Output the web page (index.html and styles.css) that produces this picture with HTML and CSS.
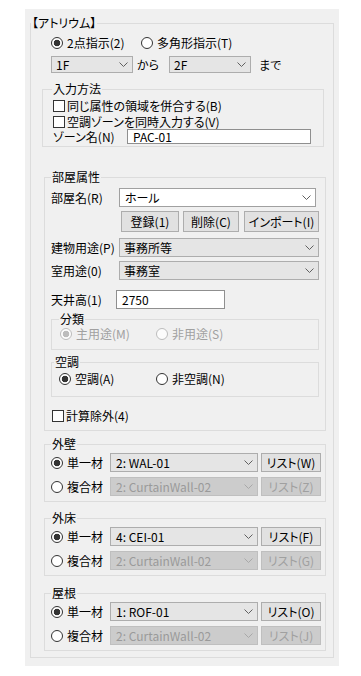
FILE: index.html
```html
<!DOCTYPE html>
<html lang="ja">
<head>
<meta charset="utf-8">
<title>アトリウム</title>
<link rel="stylesheet" href="styles.css">
</head>
<body>
<div class="panel">
  <section class="box outer">
    <div class="title t-outer">【アトリウム】</div>
    <div class="r-mode">
      <label class="opt w-mode1"><span class="radio on"></span>2点指示(2)</label>
      <label class="opt"><span class="radio"></span>多角形指示(T)</label>
    </div>
    <div class="r-floor">
      <div class="combo floor"><span>1F</span><svg class="chev" width="9" height="5" viewBox="0 0 9 5"><polyline points="0.5,0.5 4.5,4.5 8.5,0.5"/></svg></div>
      <span class="w-kara">から</span>
      <div class="combo floor"><span>2F</span><svg class="chev" width="9" height="5" viewBox="0 0 9 5"><polyline points="0.5,0.5 4.5,4.5 8.5,0.5"/></svg></div>
      <span class="w-made">まで</span>
    </div>

    <section class="box method">
      <div class="title t-method">入力方法</div>
      <label class="chk-row h16"><span class="check"></span>同じ属性の領域を併合する(B)</label>
      <label class="chk-row h15"><span class="check"></span>空調ゾーンを同時入力する(V)</label>
      <div class="zone">
        <span class="lbl-zone">ゾーン名(N)</span>
        <div class="edit zone-edit">PAC-01</div>
      </div>
    </section>

    <section class="box room">
      <div class="title t-room">部屋属性</div>
      <div class="f-row">
        <span class="lbl-room">部屋名(R)</span>
        <div class="combo-edit room-name"><span>ホール</span><svg class="chev" width="9" height="5" viewBox="0 0 9 5"><polyline points="0.5,0.5 4.5,4.5 8.5,0.5"/></svg></div>
      </div>
      <div class="btn-row">
        <button class="btn b-reg">登録(1)</button>
        <button class="btn b-del">削除(C)</button>
        <button class="btn b-imp">インポート(I)</button>
      </div>
      <div class="f-row mt6">
        <span class="lbl-room">建物用途(P)</span>
        <div class="combo use"><span>事務所等</span><svg class="chev" width="9" height="5" viewBox="0 0 9 5"><polyline points="0.5,0.5 4.5,4.5 8.5,0.5"/></svg></div>
      </div>
      <div class="f-row mt4">
        <span class="lbl-room">室用途(0)</span>
        <div class="combo use"><span>事務室</span><svg class="chev" width="9" height="5" viewBox="0 0 9 5"><polyline points="0.5,0.5 4.5,4.5 8.5,0.5"/></svg></div>
      </div>
      <div class="f-row mt10">
        <span class="lbl-ceil">天井高(1)</span>
        <div class="edit ceil-edit">2750</div>
      </div>

      <section class="box cls">
        <div class="title t-cls">分類</div>
        <div class="cls-row">
          <label class="opt-dis w-cls1"><span class="radio-dis on"></span>主用途(M)</label>
          <label class="opt-dis"><span class="radio-dis"></span>非用途(S)</label>
        </div>
      </section>

      <section class="box air">
        <div class="title t-air">空調</div>
        <div class="air-row">
          <label class="opt w-air1"><span class="radio on"></span>空調(A)</label>
          <label class="opt"><span class="radio"></span>非空調(N)</label>
        </div>
      </section>

      <label class="chk-row excl"><span class="check"></span>計算除外(4)</label>
    </section>

    <section class="box mat mat-first">
      <div class="title t-mat">外壁</div>
      <div class="mat-row">
        <label class="opt w-mat"><span class="radio on"></span>単一材</label>
        <div class="combo m-combo"><span>2: WAL-01</span><svg class="chev" width="9" height="5" viewBox="0 0 9 5"><polyline points="0.5,0.5 4.5,4.5 8.5,0.5"/></svg></div>
        <button class="btn m-btn">リスト(W)</button>
      </div>
      <div class="mat-row mat-second">
        <label class="opt w-mat"><span class="radio"></span>複合材</label>
        <div class="combo-dis m-combo"><span>2: CurtainWall-02</span><svg class="chev-dis" width="9" height="5" viewBox="0 0 9 5"><polyline points="0.5,0.5 4.5,4.5 8.5,0.5"/></svg></div>
        <button class="btn-dis m-btn">リスト(Z)</button>
      </div>
    </section>

    <section class="box mat">
      <div class="title t-mat">外床</div>
      <div class="mat-row">
        <label class="opt w-mat"><span class="radio on"></span>単一材</label>
        <div class="combo m-combo"><span>4: CEI-01</span><svg class="chev" width="9" height="5" viewBox="0 0 9 5"><polyline points="0.5,0.5 4.5,4.5 8.5,0.5"/></svg></div>
        <button class="btn m-btn">リスト(F)</button>
      </div>
      <div class="mat-row mat-second">
        <label class="opt w-mat"><span class="radio"></span>複合材</label>
        <div class="combo-dis m-combo"><span>2: CurtainWall-02</span><svg class="chev-dis" width="9" height="5" viewBox="0 0 9 5"><polyline points="0.5,0.5 4.5,4.5 8.5,0.5"/></svg></div>
        <button class="btn-dis m-btn">リスト(G)</button>
      </div>
    </section>

    <section class="box mat mat-last">
      <div class="title t-mat">屋根</div>
      <div class="mat-row">
        <label class="opt w-mat"><span class="radio on"></span>単一材</label>
        <div class="combo m-combo"><span>1: ROF-01</span><svg class="chev" width="9" height="5" viewBox="0 0 9 5"><polyline points="0.5,0.5 4.5,4.5 8.5,0.5"/></svg></div>
        <button class="btn m-btn">リスト(O)</button>
      </div>
      <div class="mat-row mat-second">
        <label class="opt w-mat"><span class="radio"></span>複合材</label>
        <div class="combo-dis m-combo"><span>2: CurtainWall-02</span><svg class="chev-dis" width="9" height="5" viewBox="0 0 9 5"><polyline points="0.5,0.5 4.5,4.5 8.5,0.5"/></svg></div>
        <button class="btn-dis m-btn">リスト(J)</button>
      </div>
    </section>
  </section>
</div>
</body>
</html>
```

FILE: styles.css
```css
* { box-sizing: border-box; }
html, body { margin: 0; padding: 0; background: #ffffff; }
body {
  font-family: "Noto Sans CJK JP", "Noto Sans", sans-serif;
  font-size: 12px;
  font-feature-settings: "palt";
  color: #000;
  line-height: 14px;
}

.panel {
  margin: 9px 0 0 25px;
  width: 314px;
  height: 657px;
  background: #f0f0f0;
  padding: 14px 5px 0 5px;
}

/* group box: border + title sitting on the top line */
.box { border: 1px solid #dcdcdc; }
.title {
  width: fit-content;
  height: 14px;
  line-height: 14px;
  margin-top: -8px;
  padding: 0 1px;
  background: #f0f0f0;
  white-space: nowrap;
}

/* outer group */
.outer { width: 304px; padding-bottom: 6px; }
.t-outer { margin-left: 0; margin-bottom: 6px; }

.opt { display: flex; align-items: center; gap: 4px; white-space: nowrap; }
.radio {
  flex: none;
  width: 12px; height: 12px;
  border: 1px solid #333;
  border-radius: 50%;
  background: #fff;
}
.on { background: radial-gradient(circle at center, #333 0, #333 3px, #fff 3.6px); }
.opt-dis { display: flex; align-items: center; gap: 4px; white-space: nowrap; color: #a0a0a0; }
.radio-dis {
  flex: none;
  width: 12px; height: 12px;
  border: 1px solid #bcbcbc;
  border-radius: 50%;
  background: #fcfcfc;
}
.radio-dis.on { background: radial-gradient(circle at center, #bcbcbc 0, #bcbcbc 3px, #fcfcfc 3.6px); }

.check {
  flex: none;
  width: 12px; height: 12px;
  border: 1px solid #333;
  background: #fff;
}

.r-mode { display: flex; align-items: center; height: 14px; margin-left: 20px; }
.w-mode1 { width: 90px; }

.r-floor { display: flex; align-items: center; height: 17px; margin-top: 6px; margin-left: 20px; }
.floor { width: 82px; height: 17px; }
.w-kara { margin: 0 10px 0 4px; }
.w-made { margin-left: 8px; }

/* combos */
.combo, .combo-edit, .combo-dis {
  display: flex;
  align-items: center;
  justify-content: space-between;
  padding: 0 4px 0 4px;
  border: 1px solid #adadad;
  background: #e5e5e5;
  white-space: nowrap;
  overflow: hidden;
}
.combo-edit { background: #fff; border-color: #a0a0a0; padding-left: 5px; }
.combo-dis { background: #cccccc; border-color: #bfbfbf; color: #9a9a9a; }
.chev { flex: none; fill: none; stroke: #606060; stroke-width: 1; }
.chev-dis { flex: none; fill: none; stroke: #a8a8a8; stroke-width: 1; }

.edit {
  display: flex;
  align-items: center;
  background: #fff;
  border: 1px solid #8f8f8f;
  padding-left: 5px;
  white-space: nowrap;
}

/* input method */
.method { margin-top: 16px; margin-left: 11px; width: 282px; padding-bottom: 2px; }
.t-method { margin-left: 9px; margin-bottom: 2px; }
.chk-row { display: flex; align-items: center; gap: 2px; margin-left: 10px; white-space: nowrap; }
.h16 { height: 16px; }
.h15 { height: 15px; }
.zone { display: flex; align-items: center; height: 15px; margin-left: 10px; }
.lbl-zone { width: 74px; white-space: nowrap; }
.zone-edit { width: 184px; height: 15px; }

/* room attributes */
.room { margin-top: 30px; margin-left: 13px; width: 282px; padding-bottom: 7px; }
.t-room { margin-left: 6px; margin-bottom: 4px; }
.f-row { display: flex; align-items: center; margin-left: 6px; height: 19px; }
.lbl-room { width: 68px; white-space: nowrap; }
.lbl-ceil { width: 65px; white-space: nowrap; }
.room-name { width: 197px; height: 19px; }
.use { width: 200px; height: 19px; }
.ceil-edit { width: 109px; height: 19px; }
.mt4 { margin-top: 4px; }
.mt6 { margin-top: 6px; }
.mt10 { margin-top: 10px; }

.btn, .btn-dis {
  display: flex;
  align-items: center;
  justify-content: center;
  height: 21px;
  padding: 0;
  border: 1px solid #adadad;
  background: #e1e1e1;
  font-family: inherit;
  font-size: 12px;
  font-feature-settings: "palt";
  line-height: 14px;
  color: #000;
  white-space: nowrap;
}
.btn-dis { background: #cccccc; border-color: #bfbfbf; color: #a0a0a0; }
.btn-row { display: flex; align-items: center; margin-top: 4px; margin-left: 76px; height: 21px; }
.b-reg { width: 58px; }
.b-del { width: 56px; margin-left: 4px; }
.b-imp { width: 75px; margin-left: 5px; }

.cls { margin-top: 10px; margin-left: 6px; width: 268px; padding-bottom: 8px; }
.air { margin-top: 12px; margin-left: 6px; width: 268px; padding-bottom: 10px; }
.t-cls { margin-left: 7px; margin-bottom: 1px; }
.t-air { margin-left: 2px; margin-bottom: 3px; }
.cls-row { display: flex; align-items: center; height: 14px; margin-left: 8px; }
.air-row { display: flex; align-items: center; height: 14px; margin-left: 7px; }
.w-cls1 { width: 96px; }
.w-air1 { width: 97px; }

.excl { margin-top: 12px; margin-left: 7px; height: 14px; }

/* material groups */
.mat { margin-top: 16px; margin-left: 13px; width: 282px; padding-bottom: 5px; }
.mat-first { margin-top: 13px; }
.mat-last { margin-top: 17px; }
.t-mat { margin-left: 6px; margin-bottom: 2px; }
.mat-row { display: flex; align-items: center; height: 19px; margin-left: 6px; }
.mat-second { margin-top: 5px; }
.w-mat { width: 59px; }
.m-combo { width: 148px; height: 19px; padding-left: 5px; }
.m-btn { width: 60px; height: 19px; margin-left: 3px; }
```
